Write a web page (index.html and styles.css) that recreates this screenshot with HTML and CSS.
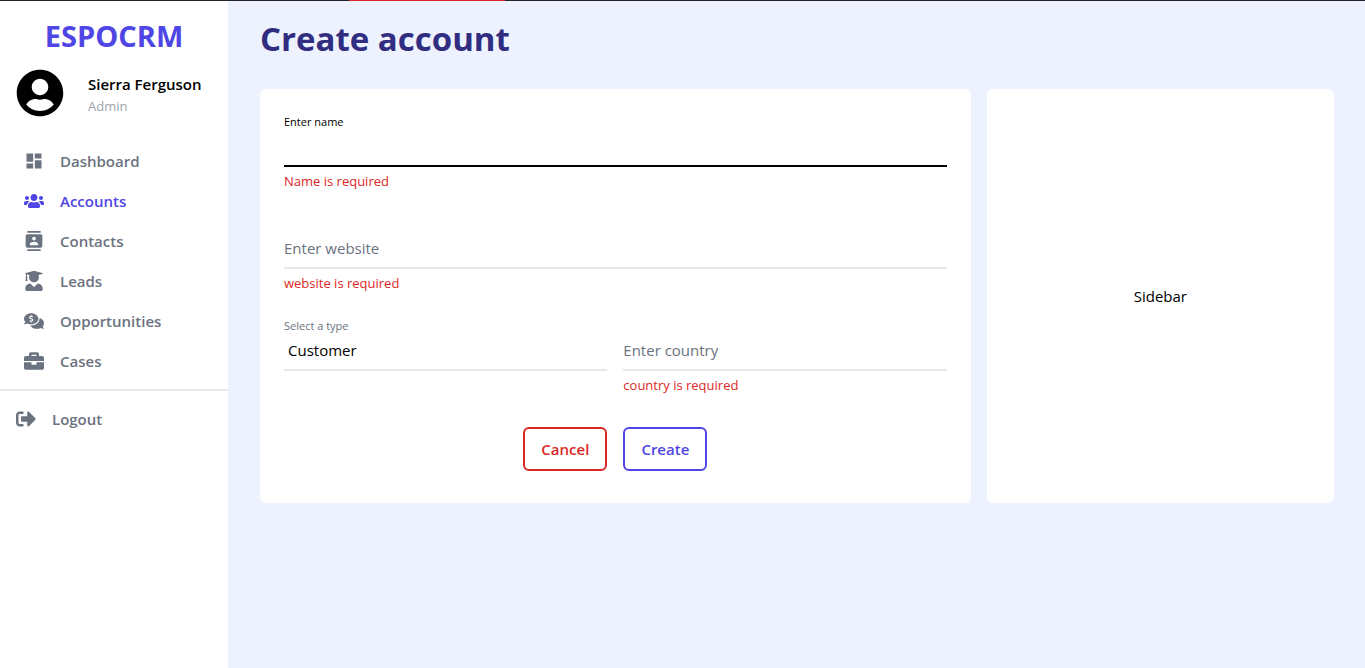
FILE: index.html
```html
<!DOCTYPE html>
<html lang="en">
<head>
  <meta charset="utf-8">
  <meta name="viewport" content="width=device-width, initial-scale=1">
  <title>Create account - EspoCRM</title>
  <link rel="stylesheet" href="styles.css">
</head>
<body>
  <div class="top-line"><div class="top-line-accent"></div></div>
  <div class="layout">
    <aside class="sidebar">
      <div class="brand">ESPOCRM</div>
      <div class="profile">
        <svg class="avatar" viewBox="0 0 496 512" aria-hidden="true"><path d="M248 8C111 8 0 119 0 256s111 248 248 248 248-111 248-248S385 8 248 8zm0 96c48.600 0 88 39.400 88 88s-39.400 88-88 88-88-39.400-88-88 39.400-88 88-88zm0 344c-58.700 0-111.300-26.600-146.500-68.200 18.800-35.400 55.600-59.800 98.500-59.800 2.400 0 4.800.400 7.100 1.100 13 4.200 26.600 6.900 40.900 6.900 14.300 0 28-2.700 40.900-6.900 2.300-.700 4.700-1.100 7.100-1.100 42.900 0 79.700 24.400 98.500 59.800C359.300 421.400 306.700 448 248 448z"/></svg>
        <div class="profile-text">
          <div class="profile-name">Sierra Ferguson</div>
          <div class="profile-role">Admin</div>
        </div>
      </div>
      <nav class="nav">
        <a class="nav-link" href="#dashboard">
          <svg class="icon" viewBox="0 0 24 24" aria-hidden="true"><path d="M3 13h8V3H3v10zm0 8h8v-6H3v6zm10 0h8V11h-8v10zm0-18v6h8V3h-8z"/></svg>
          Dashboard
        </a>
        <a class="nav-link nav-link-active" href="#accounts" aria-current="page">
          <svg class="icon" viewBox="0 0 640 512" aria-hidden="true"><path d="M96 224c35.300 0 64-28.700 64-64s-28.700-64-64-64-64 28.700-64 64 28.700 64 64 64zm448 0c35.300 0 64-28.700 64-64s-28.700-64-64-64-64 28.700-64 64 28.700 64 64 64zm32 32h-64c-17.600 0-33.500 7.100-45.100 18.600 40.300 22.100 68.900 62 75.100 109.400h66c17.700 0 32-14.300 32-32v-32c0-35.300-28.700-64-64-64zm-256 0c61.900 0 112-50.100 112-112S381.900 32 320 32 208 82.100 208 144s50.100 112 112 112zm76.800 32h-8.300c-20.800 10-43.900 16-68.500 16s-47.600-6-68.500-16h-8.300C179.600 288 128 339.600 128 403.200V432c0 26.500 21.500 48 48 48h288c26.500 0 48-21.500 48-48v-28.800c0-63.600-51.600-115.200-115.200-115.200zm-223.700-13.400C161.500 263.100 145.600 256 128 256H64c-35.300 0-64 28.700-64 64v32c0 17.700 14.300 32 32 32h65.900c6.300-47.400 34.900-87.300 75.200-109.400z"/></svg>
          Accounts
        </a>
        <a class="nav-link" href="#contacts">
          <svg class="icon" viewBox="0 0 24 24" aria-hidden="true"><path d="M20 0H4v2h16V0zM4 24h16v-2H4v2zM20 4H4c-1.100 0-2 .9-2 2v12c0 1.100.9 2 2 2h16c1.100 0 2-.9 2-2V6c0-1.100-.9-2-2-2zm-8 2.750c1.240 0 2.250 1.010 2.250 2.250s-1.010 2.250-2.250 2.250S9.750 10.240 9.750 9 10.760 6.750 12 6.750zM17 17H7v-1.500c0-1.670 3.330-2.500 5-2.500s5 .83 5 2.500V17z"/></svg>
          Contacts
        </a>
        <a class="nav-link" href="#leads">
          <svg class="icon" viewBox="0 0 448 512" aria-hidden="true"><path d="M319.400 320.600L224 416l-95.400-95.400C57.100 323.700 0 382.200 0 454.400v9.600c0 26.500 21.500 48 48 48h352c26.500 0 48-21.500 48-48v-9.600c0-72.200-57.100-130.700-128.600-133.800zM13.600 79.800l6.400 1.500v58.400c-7 4.200-12 11.500-12 20.300 0 8.400 4.600 15.400 11.100 19.700L3.500 242c-1.700 6.900 2.100 14 7.600 14h41.800c5.500 0 9.300-7.100 7.600-14l-15.600-62.300C51.400 175.400 56 168.400 56 160c0-8.800-5-16.100-12-20.300V87.100l66 15.900c-8.600 17.200-14 36.400-14 57 0 70.700 57.300 128 128 128s128-57.300 128-128c0-20.600-5.300-39.800-14-57l96.300-23.200c18.200-4.400 18.200-27.100 0-31.500l-190.400-46c-13-3.100-26.700-3.100-39.700 0L13.600 48.200c-18.100 4.400-18.100 27.200 0 31.600z"/></svg>
          Leads
        </a>
        <a class="nav-link" href="#opportunities">
          <svg class="icon" viewBox="0 0 576 512" aria-hidden="true"><path d="M416 192c0-88.370-93.120-160-208-160S0 103.630 0 192c0 34.270 14.130 65.950 37.970 92.030C24.610 314.220 2.520 338.160 2.200 338.500A7.995 7.995 0 0 0 8 352c36.580 0 66.930-12.250 88.730-24.980C128.930 342.760 167.020 352 208 352c114.880 0 208-71.630 208-160zm-224 96v-16.290c-11.290-.58-22.270-4.520-31.370-11.350-3.900-2.930-4.100-8.770-.57-12.140l11.750-11.210c2.770-2.640 6.890-2.760 10.130-.73 3.870 2.420 8.260 3.720 12.820 3.720h28.110c6.500 0 11.800-5.920 11.800-13.190 0-5.950-3.610-11.190-8.770-12.730l-45-13.500c-18.590-5.580-31.580-23.420-31.580-43.390 0-24.520 19.050-44.440 42.670-45.070V96c0-4.420 3.580-8 8-8h16c4.420 0 8 3.580 8 8v16.290c11.290.58 22.270 4.510 31.370 11.350 3.900 2.930 4.100 8.770.57 12.140l-11.750 11.210c-2.770 2.640-6.890 2.760-10.130.73-3.870-2.430-8.260-3.720-12.820-3.720h-28.110c-6.500 0-11.800 5.920-11.800 13.190 0 5.950 3.610 11.190 8.770 12.730l45 13.500c18.590 5.580 31.580 23.420 31.580 43.390 0 24.530-19.050 44.440-42.670 45.070V288c0 4.420-3.580 8-8 8h-16c-4.420 0-8-3.580-8-8zm346.010 124.030C561.870 385.960 576 354.270 576 320c0-66.940-53.490-124.200-129.330-148.070.86 6.600 1.330 13.290 1.330 20.070 0 105.870-107.660 192-240 192-10.780 0-21.320-.77-31.730-1.880C207.800 439.630 281.770 480 368 480c40.980 0 79.070-9.240 111.270-24.980C501.070 467.750 531.420 480 568 480c3.200 0 6.090-1.910 7.340-4.840 1.270-2.940.66-6.340-1.550-8.670-.31-.33-22.420-24.240-35.780-54.460z"/></svg>
          Opportunities
        </a>
        <a class="nav-link" href="#cases">
          <svg class="icon" viewBox="0 0 512 512" aria-hidden="true"><path d="M320 336c0 8.840-7.160 16-16 16h-96c-8.840 0-16-7.160-16-16v-48H0v144c0 25.600 22.400 48 48 48h416c25.600 0 48-22.400 48-48V288H320v48zm144-208h-80V80c0-25.600-22.400-48-48-48H176c-25.600 0-48 22.400-48 48v48H48c-25.600 0-48 22.400-48 48v80h512v-80c0-25.600-22.400-48-48-48zm-144 0H192V96h128v32z"/></svg>
          Cases
        </a>
      </nav>
      <button class="nav-link logout" type="button">
        <svg class="icon" viewBox="0 0 512 512" aria-hidden="true"><path d="M497 273L329 441c-15 15-41 4.500-41-17v-96H152c-13.300 0-24-10.700-24-24v-96c0-13.300 10.700-24 24-24h136V88c0-21.400 25.900-32 41-17l168 168c9.300 9.400 9.300 24.600 0 34zM192 436v-40c0-6.600-5.400-12-12-12H96c-17.700 0-32-14.300-32-32V160c0-17.700 14.300-32 32-32h84c6.600 0 12-5.400 12-12V76c0-6.600-5.400-12-12-12H96c-53 0-96 43-96 96v192c0 53 43 96 96 96h84c6.600 0 12-5.400 12-12z"/></svg>
        Logout
      </button>
    </aside>

    <main class="main">
      <h1 class="title">Create account</h1>
      <div class="panels">
        <form class="panel form">
          <div class="field">
            <label class="label label-focused" for="name">Enter name</label>
            <input class="control control-focused" id="name" type="text" aria-describedby="name-error">
            <p class="error" id="name-error">Name is required</p>
          </div>
          <div class="field field-unlabelled">
            <input class="control" type="text" placeholder="Enter website" aria-label="Enter website" aria-describedby="website-error">
            <p class="error" id="website-error">website is required</p>
          </div>
          <div class="field-row">
            <div class="field">
              <label class="label" for="type">Select a type</label>
              <select class="control control-select" id="type">
                <option>Customer</option>
              </select>
            </div>
            <div class="field field-unlabelled">
              <input class="control" type="text" placeholder="Enter country" aria-label="Enter country" aria-describedby="country-error">
              <p class="error" id="country-error">country is required</p>
            </div>
          </div>
          <div class="actions">
            <button class="button button-cancel" type="button">Cancel</button>
            <button class="button button-create" type="submit">Create</button>
          </div>
        </form>
        <section class="panel side-panel">Sidebar</section>
      </div>
    </main>
  </div>
</body>
</html>
```

FILE: styles.css
```css
* {
  box-sizing: border-box;
}

body {
  margin: 0;
  min-height: 100vh;
  display: flex;
  flex-direction: column;
  font-family: "Open Sans", "Noto Sans", sans-serif;
  font-size: 15px;
  line-height: 24px;
  color: #000;
  background: #eef2ff;
}

input,
select,
button {
  font: inherit;
}

.top-line {
  height: 1px;
  padding-left: 349px;
  background: #25222a;
}

.top-line-accent {
  width: 156px;
  height: 1px;
  background: #dc2626;
}

.layout {
  flex: 1;
  display: grid;
  grid-template-columns: 228px 1fr;
}

.sidebar {
  padding-top: 16px;
  background: #fff;
}

.brand {
  font-size: 29px;
  font-weight: 700;
  line-height: 38px;
  text-align: center;
  color: #4f46e5;
}

.profile {
  display: flex;
  align-items: flex-end;
  gap: 24px;
  padding: 14px 16px 24px;
}

.avatar {
  width: 48px;
  height: 48px;
}

.profile-text {
  padding-bottom: 1px;
}

.profile-name {
  font-weight: 600;
}

.profile-role {
  font-size: 13px;
  line-height: 20px;
  color: #9ca3af;
}

.nav {
  padding: 0 8px 8px;
  border-bottom: 2px solid #e5e7eb;
}

.nav-link {
  display: flex;
  align-items: center;
  gap: 16px;
  padding: 8px 16px;
  font-weight: 600;
  color: #6b7280;
  text-decoration: none;
}

.nav-link-active {
  color: #4f46e5;
}

.logout {
  width: 100%;
  margin-top: 8px;
  border: 0;
  background: none;
}

.icon {
  width: 20px;
  height: 20px;
  fill: currentColor;
}

.main {
  padding: 16px 31px 32px 32px;
}

.title {
  margin: 0 0 28px;
  font-size: 33px;
  font-weight: 700;
  line-height: 44px;
  color: #312e81;
}

.panels {
  display: grid;
  grid-template-columns: repeat(3, 1fr);
  column-gap: 16px;
}

.panel {
  border-radius: 6px;
  background: #fff;
}

.form {
  grid-column: span 2;
  padding: 24px 24px 32px;
}

.side-panel {
  display: flex;
  align-items: center;
  justify-content: center;
}

.field {
  margin-bottom: 24px;
}

.field-unlabelled {
  padding-top: 18px;
}

.field-row {
  display: grid;
  grid-template-columns: 1fr 1fr;
  column-gap: 16px;
}

.label {
  display: block;
  font-size: 11px;
  line-height: 18px;
  color: #6b7280;
}

.label-focused {
  color: #000;
}

.control {
  display: block;
  width: 100%;
  height: 36px;
  padding: 0 0 4px;
  border: 0;
  border-bottom: 2px solid #e5e7eb;
  border-radius: 0;
  outline: 0;
  background: transparent;
  color: #000;
  appearance: none;
}

.control::placeholder {
  color: #6b7280;
  opacity: 1;
}

.control-focused {
  border-bottom-color: #000;
}

.control-select {
  padding-left: 4px;
}

.error {
  margin: 4px 0 0;
  font-size: 13px;
  line-height: 20px;
  color: #dc2626;
}

.actions {
  display: flex;
  justify-content: center;
  gap: 16px;
  padding-top: 8px;
}

.button {
  padding: 8px 16px;
  border: 2px solid currentColor;
  border-radius: 6px;
  font-weight: 600;
  background: #fff;
}

.button-cancel {
  color: #dc2626;
}

.button-create {
  color: #4f46e5;
}
```
